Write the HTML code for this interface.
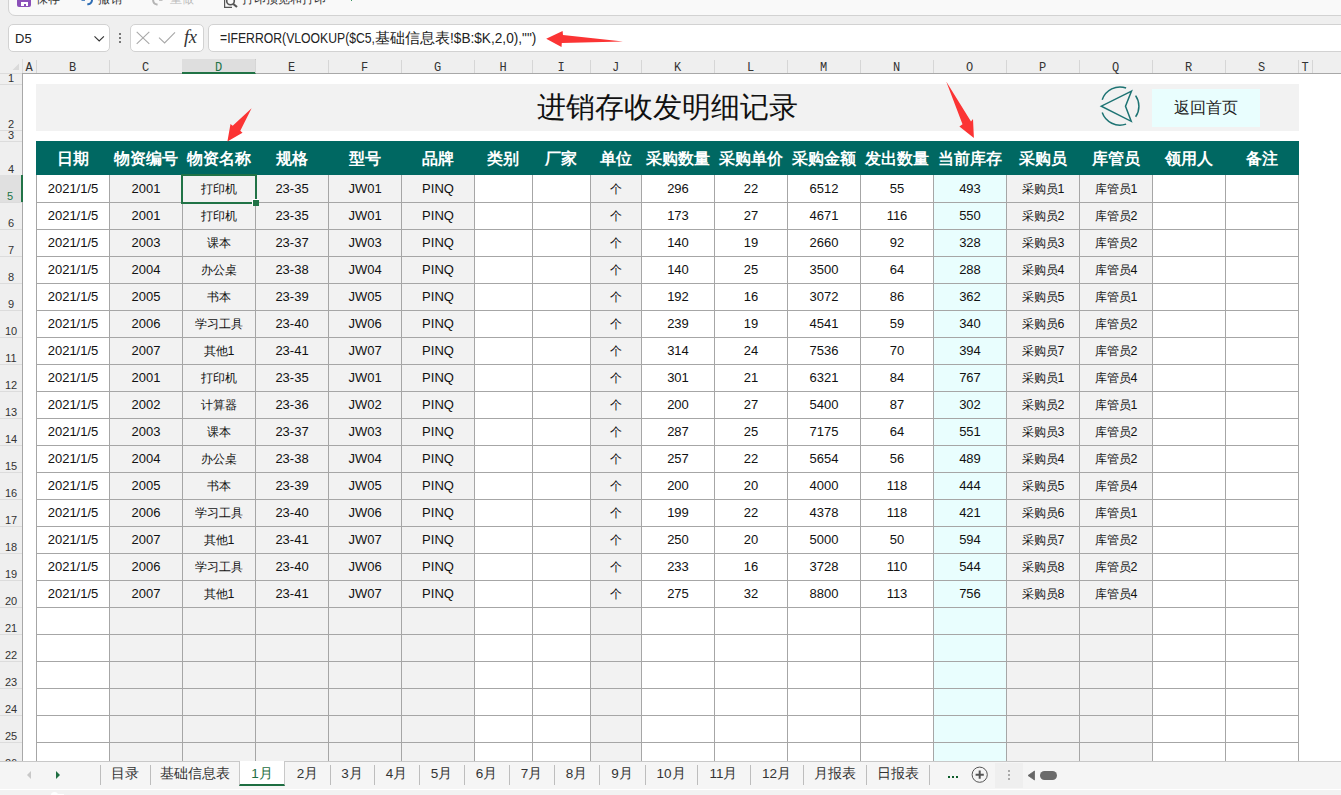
<!DOCTYPE html>
<html><head><meta charset="utf-8"><style>
*{box-sizing:border-box;margin:0;padding:0}
html,body{width:1341px;height:795px;overflow:hidden;background:#efefef;font-family:"Liberation Sans",sans-serif;position:relative}
.a{position:absolute}
.t{position:absolute;white-space:nowrap;text-align:center;display:flex;align-items:center;justify-content:center}
.ch{position:absolute;top:59px;height:14px;font-family:"Liberation Serif",serif;font-size:12px;line-height:14px;color:#333;text-align:center}
.rh{position:absolute;left:0;width:22px;font-family:"Liberation Serif",serif;font-size:12px;color:#333;text-align:center;display:flex;align-items:flex-end;justify-content:center}
.cell{position:absolute;height:27px;display:flex;align-items:center;justify-content:center;font-size:13px;color:#111;white-space:nowrap}
.hd{position:absolute;top:142px;height:34px;display:flex;align-items:center;justify-content:center;font-size:16px;font-weight:bold;color:#fff;white-space:nowrap}
.tab{position:absolute;top:760px;height:28px;display:flex;align-items:center;justify-content:center;font-size:13.5px;color:#333;white-space:nowrap}
.sep{position:absolute;top:765px;width:1px;height:20px;background:#bdbdbd}
</style></head><body>

<div class="a" style="left:8px;top:-12px;width:1400px;height:28px;background:#f9f9f9;border:1px solid #d2d2d2;border-radius:7px"></div>
<div class="a" style="left:23px;top:74px;width:1318px;height:687px;background:#fff"></div>
<div class="a" style="left:0;top:52px;width:1341px;height:21px;background:#efefef"></div>
<div class="a" style="left:22px;top:73px;width:1319px;height:1px;background:#a8a8a8"></div>
<div class="a" style="left:0;top:73px;width:22px;height:1px;background:#dcdcdc"></div>
<div class="a" style="left:22px;top:59px;width:1px;height:14px;background:#dcdcdc"></div>
<div class="a" style="left:22px;top:73px;width:1px;height:688px;background:#a8a8a8"></div>
<div class="ch" style="left:22px;width:14px;color:#333;"><span style="position:relative;top:1px;display:inline-block;font-family:'Liberation Mono',monospace;font-size:12px">A</span></div>
<div class="a" style="left:36px;top:60px;width:1px;height:13px;background:#d6d6d6"></div>
<div class="ch" style="left:36px;width:73px;color:#333;"><span style="position:relative;top:1px;display:inline-block;font-family:'Liberation Mono',monospace;font-size:12px">B</span></div>
<div class="a" style="left:109px;top:60px;width:1px;height:13px;background:#d6d6d6"></div>
<div class="ch" style="left:109px;width:73px;color:#333;"><span style="position:relative;top:1px;display:inline-block;font-family:'Liberation Mono',monospace;font-size:12px">C</span></div>
<div class="a" style="left:182px;top:60px;width:1px;height:13px;background:#d6d6d6"></div>
<div class="ch" style="left:182px;width:73px;color:#217346;background:#dedede;border-bottom:2px solid #217346;height:15px;width:74px;border-right:1px solid #c8c8c8;"><span style="position:relative;top:1px;display:inline-block;font-family:'Liberation Mono',monospace;font-size:12px">D</span></div>
<div class="a" style="left:255px;top:60px;width:1px;height:13px;background:#d6d6d6"></div>
<div class="ch" style="left:255px;width:73px;color:#333;"><span style="position:relative;top:1px;display:inline-block;font-family:'Liberation Mono',monospace;font-size:12px">E</span></div>
<div class="a" style="left:328px;top:60px;width:1px;height:13px;background:#d6d6d6"></div>
<div class="ch" style="left:328px;width:73px;color:#333;"><span style="position:relative;top:1px;display:inline-block;font-family:'Liberation Mono',monospace;font-size:12px">F</span></div>
<div class="a" style="left:401px;top:60px;width:1px;height:13px;background:#d6d6d6"></div>
<div class="ch" style="left:401px;width:73px;color:#333;"><span style="position:relative;top:1px;display:inline-block;font-family:'Liberation Mono',monospace;font-size:12px">G</span></div>
<div class="a" style="left:474px;top:60px;width:1px;height:13px;background:#d6d6d6"></div>
<div class="ch" style="left:474px;width:58px;color:#333;"><span style="position:relative;top:1px;display:inline-block;font-family:'Liberation Mono',monospace;font-size:12px">H</span></div>
<div class="a" style="left:532px;top:60px;width:1px;height:13px;background:#d6d6d6"></div>
<div class="ch" style="left:532px;width:58px;color:#333;"><span style="position:relative;top:1px;display:inline-block;font-family:'Liberation Mono',monospace;font-size:12px">I</span></div>
<div class="a" style="left:590px;top:60px;width:1px;height:13px;background:#d6d6d6"></div>
<div class="ch" style="left:590px;width:51px;color:#333;"><span style="position:relative;top:1px;display:inline-block;font-family:'Liberation Mono',monospace;font-size:12px">J</span></div>
<div class="a" style="left:641px;top:60px;width:1px;height:13px;background:#d6d6d6"></div>
<div class="ch" style="left:641px;width:73px;color:#333;"><span style="position:relative;top:1px;display:inline-block;font-family:'Liberation Mono',monospace;font-size:12px">K</span></div>
<div class="a" style="left:714px;top:60px;width:1px;height:13px;background:#d6d6d6"></div>
<div class="ch" style="left:714px;width:73px;color:#333;"><span style="position:relative;top:1px;display:inline-block;font-family:'Liberation Mono',monospace;font-size:12px">L</span></div>
<div class="a" style="left:787px;top:60px;width:1px;height:13px;background:#d6d6d6"></div>
<div class="ch" style="left:787px;width:73px;color:#333;"><span style="position:relative;top:1px;display:inline-block;font-family:'Liberation Mono',monospace;font-size:12px">M</span></div>
<div class="a" style="left:860px;top:60px;width:1px;height:13px;background:#d6d6d6"></div>
<div class="ch" style="left:860px;width:73px;color:#333;"><span style="position:relative;top:1px;display:inline-block;font-family:'Liberation Mono',monospace;font-size:12px">N</span></div>
<div class="a" style="left:933px;top:60px;width:1px;height:13px;background:#d6d6d6"></div>
<div class="ch" style="left:933px;width:73px;color:#333;"><span style="position:relative;top:1px;display:inline-block;font-family:'Liberation Mono',monospace;font-size:12px">O</span></div>
<div class="a" style="left:1006px;top:60px;width:1px;height:13px;background:#d6d6d6"></div>
<div class="ch" style="left:1006px;width:73px;color:#333;"><span style="position:relative;top:1px;display:inline-block;font-family:'Liberation Mono',monospace;font-size:12px">P</span></div>
<div class="a" style="left:1079px;top:60px;width:1px;height:13px;background:#d6d6d6"></div>
<div class="ch" style="left:1079px;width:73px;color:#333;"><span style="position:relative;top:1px;display:inline-block;font-family:'Liberation Mono',monospace;font-size:12px">Q</span></div>
<div class="a" style="left:1152px;top:60px;width:1px;height:13px;background:#d6d6d6"></div>
<div class="ch" style="left:1152px;width:73px;color:#333;"><span style="position:relative;top:1px;display:inline-block;font-family:'Liberation Mono',monospace;font-size:12px">R</span></div>
<div class="a" style="left:1225px;top:60px;width:1px;height:13px;background:#d6d6d6"></div>
<div class="ch" style="left:1225px;width:73px;color:#333;"><span style="position:relative;top:1px;display:inline-block;font-family:'Liberation Mono',monospace;font-size:12px">S</span></div>
<div class="a" style="left:1298px;top:60px;width:1px;height:13px;background:#d6d6d6"></div>
<div class="ch" style="left:1298px;width:14px;color:#333;"><span style="position:relative;top:1px;display:inline-block;font-family:'Liberation Mono',monospace;font-size:12px">T</span></div>
<div class="a" style="left:1312px;top:60px;width:1px;height:13px;background:#d6d6d6"></div>
<svg class="a" style="left:10px;top:62px" width="12" height="10" viewBox="0 0 12 10"><path d="M9 1.5 L9 8 L2.5 8 Z" fill="#dadada"/></svg>
<div class="rh" style="top:73px;height:11px;color:#333;"><span style="position:relative;top:0px;font-family:'Liberation Sans',sans-serif;font-size:11px">1</span></div>
<div class="a" style="left:0;top:84px;width:22px;height:1px;background:#dcdcdc"></div>
<div class="rh" style="top:84px;height:46px;color:#333;"><span style="position:relative;top:0px;font-family:'Liberation Sans',sans-serif;font-size:11px">2</span></div>
<div class="a" style="left:0;top:130px;width:22px;height:1px;background:#dcdcdc"></div>
<div class="rh" style="top:130px;height:11px;color:#333;"><span style="position:relative;top:0px;font-family:'Liberation Sans',sans-serif;font-size:11px">3</span></div>
<div class="a" style="left:0;top:141px;width:22px;height:1px;background:#dcdcdc"></div>
<div class="rh" style="top:141px;height:34px;color:#333;"><span style="position:relative;top:0px;font-family:'Liberation Sans',sans-serif;font-size:11px">4</span></div>
<div class="a" style="left:0;top:175px;width:22px;height:1px;background:#dcdcdc"></div>
<div class="rh" style="top:175px;height:27px;color:#217346;background:#e0e0e0;border-right:2px solid #217346;width:23px;padding-right:1px;"><span style="position:relative;top:0px;font-family:'Liberation Sans',sans-serif;font-size:11px">5</span></div>
<div class="a" style="left:0;top:202px;width:22px;height:1px;background:#dcdcdc"></div>
<div class="rh" style="top:202px;height:27px;color:#333;"><span style="position:relative;top:0px;font-family:'Liberation Sans',sans-serif;font-size:11px">6</span></div>
<div class="a" style="left:0;top:229px;width:22px;height:1px;background:#dcdcdc"></div>
<div class="rh" style="top:229px;height:27px;color:#333;"><span style="position:relative;top:0px;font-family:'Liberation Sans',sans-serif;font-size:11px">7</span></div>
<div class="a" style="left:0;top:256px;width:22px;height:1px;background:#dcdcdc"></div>
<div class="rh" style="top:256px;height:27px;color:#333;"><span style="position:relative;top:0px;font-family:'Liberation Sans',sans-serif;font-size:11px">8</span></div>
<div class="a" style="left:0;top:283px;width:22px;height:1px;background:#dcdcdc"></div>
<div class="rh" style="top:283px;height:27px;color:#333;"><span style="position:relative;top:0px;font-family:'Liberation Sans',sans-serif;font-size:11px">9</span></div>
<div class="a" style="left:0;top:310px;width:22px;height:1px;background:#dcdcdc"></div>
<div class="rh" style="top:310px;height:27px;color:#333;"><span style="position:relative;top:0px;font-family:'Liberation Sans',sans-serif;font-size:11px">10</span></div>
<div class="a" style="left:0;top:337px;width:22px;height:1px;background:#dcdcdc"></div>
<div class="rh" style="top:337px;height:27px;color:#333;"><span style="position:relative;top:0px;font-family:'Liberation Sans',sans-serif;font-size:11px">11</span></div>
<div class="a" style="left:0;top:364px;width:22px;height:1px;background:#dcdcdc"></div>
<div class="rh" style="top:364px;height:27px;color:#333;"><span style="position:relative;top:0px;font-family:'Liberation Sans',sans-serif;font-size:11px">12</span></div>
<div class="a" style="left:0;top:391px;width:22px;height:1px;background:#dcdcdc"></div>
<div class="rh" style="top:391px;height:27px;color:#333;"><span style="position:relative;top:0px;font-family:'Liberation Sans',sans-serif;font-size:11px">13</span></div>
<div class="a" style="left:0;top:418px;width:22px;height:1px;background:#dcdcdc"></div>
<div class="rh" style="top:418px;height:27px;color:#333;"><span style="position:relative;top:0px;font-family:'Liberation Sans',sans-serif;font-size:11px">14</span></div>
<div class="a" style="left:0;top:445px;width:22px;height:1px;background:#dcdcdc"></div>
<div class="rh" style="top:445px;height:27px;color:#333;"><span style="position:relative;top:0px;font-family:'Liberation Sans',sans-serif;font-size:11px">15</span></div>
<div class="a" style="left:0;top:472px;width:22px;height:1px;background:#dcdcdc"></div>
<div class="rh" style="top:472px;height:27px;color:#333;"><span style="position:relative;top:0px;font-family:'Liberation Sans',sans-serif;font-size:11px">16</span></div>
<div class="a" style="left:0;top:499px;width:22px;height:1px;background:#dcdcdc"></div>
<div class="rh" style="top:499px;height:27px;color:#333;"><span style="position:relative;top:0px;font-family:'Liberation Sans',sans-serif;font-size:11px">17</span></div>
<div class="a" style="left:0;top:526px;width:22px;height:1px;background:#dcdcdc"></div>
<div class="rh" style="top:526px;height:27px;color:#333;"><span style="position:relative;top:0px;font-family:'Liberation Sans',sans-serif;font-size:11px">18</span></div>
<div class="a" style="left:0;top:553px;width:22px;height:1px;background:#dcdcdc"></div>
<div class="rh" style="top:553px;height:27px;color:#333;"><span style="position:relative;top:0px;font-family:'Liberation Sans',sans-serif;font-size:11px">19</span></div>
<div class="a" style="left:0;top:580px;width:22px;height:1px;background:#dcdcdc"></div>
<div class="rh" style="top:580px;height:27px;color:#333;"><span style="position:relative;top:0px;font-family:'Liberation Sans',sans-serif;font-size:11px">20</span></div>
<div class="a" style="left:0;top:607px;width:22px;height:1px;background:#dcdcdc"></div>
<div class="rh" style="top:607px;height:27px;color:#333;"><span style="position:relative;top:0px;font-family:'Liberation Sans',sans-serif;font-size:11px">21</span></div>
<div class="a" style="left:0;top:634px;width:22px;height:1px;background:#dcdcdc"></div>
<div class="rh" style="top:634px;height:27px;color:#333;"><span style="position:relative;top:0px;font-family:'Liberation Sans',sans-serif;font-size:11px">22</span></div>
<div class="a" style="left:0;top:661px;width:22px;height:1px;background:#dcdcdc"></div>
<div class="rh" style="top:661px;height:27px;color:#333;"><span style="position:relative;top:0px;font-family:'Liberation Sans',sans-serif;font-size:11px">23</span></div>
<div class="a" style="left:0;top:688px;width:22px;height:1px;background:#dcdcdc"></div>
<div class="rh" style="top:688px;height:27px;color:#333;"><span style="position:relative;top:0px;font-family:'Liberation Sans',sans-serif;font-size:11px">24</span></div>
<div class="a" style="left:0;top:715px;width:22px;height:1px;background:#dcdcdc"></div>
<div class="rh" style="top:715px;height:27px;color:#333;"><span style="position:relative;top:0px;font-family:'Liberation Sans',sans-serif;font-size:11px">25</span></div>
<div class="a" style="left:0;top:742px;width:22px;height:1px;background:#dcdcdc"></div>
<div class="rh" style="top:742px;height:27px;color:#333;"><span style="position:relative;top:0px;font-family:'Liberation Sans',sans-serif;font-size:11px">26</span></div>
<div class="a" style="left:0;top:769px;width:22px;height:1px;background:#dcdcdc"></div>
<div class="a" style="left:36px;top:84px;width:1263px;height:47px;background:#f2f2f2"></div>
<div class="t" style="left:36px;top:84px;width:1262px;height:47px;font-size:29px;color:#111">进销存收发明细记录</div>
<div class="t" style="left:1152px;top:89px;width:108px;height:38px;background:#e9fefe;font-size:16px;color:#222">返回首页</div>
<svg class="a" style="left:1095px;top:81px" width="50" height="50" viewBox="1095 81 50 50">
<path d="M1131.5 91.1 L1101.3 106.2 L1131.2 121.3 L1125.5 106.2 Z" fill="none" stroke="#1d7373" stroke-width="1.5" stroke-linejoin="miter"/>
<path d="M1102.2 99.8 A18.8 18.8 0 0 1 1126.1 88" fill="none" stroke="#1d7373" stroke-width="1.5"/>
<path d="M1102.2 112.6 A18.8 18.8 0 0 0 1126.1 124.1" fill="none" stroke="#1d7373" stroke-width="1.5"/>
<path d="M1135.6 95.6 A18.6 18.6 0 0 1 1135.6 116.8" fill="none" stroke="#1d7373" stroke-width="1.5"/>
</svg>
<div class="a" style="left:36px;top:141px;width:1263px;height:34px;background:#006862"></div>
<div class="hd" style="left:36px;width:73px">日期</div>
<div class="hd" style="left:109px;width:73px">物资编号</div>
<div class="hd" style="left:182px;width:73px">物资名称</div>
<div class="hd" style="left:255px;width:73px">规格</div>
<div class="hd" style="left:328px;width:73px">型号</div>
<div class="hd" style="left:401px;width:73px">品牌</div>
<div class="hd" style="left:474px;width:58px">类别</div>
<div class="hd" style="left:532px;width:58px">厂家</div>
<div class="hd" style="left:590px;width:51px">单位</div>
<div class="hd" style="left:641px;width:73px">采购数量</div>
<div class="hd" style="left:714px;width:73px">采购单价</div>
<div class="hd" style="left:787px;width:73px">采购金额</div>
<div class="hd" style="left:860px;width:73px">发出数量</div>
<div class="hd" style="left:933px;width:73px">当前库存</div>
<div class="hd" style="left:1006px;width:73px">采购员</div>
<div class="hd" style="left:1079px;width:73px">库管员</div>
<div class="hd" style="left:1152px;width:73px">领用人</div>
<div class="hd" style="left:1225px;width:73px">备注</div>
<div class="a" style="left:109px;top:175px;width:73px;height:586px;background:#f2f2f2"></div>
<div class="a" style="left:182px;top:175px;width:73px;height:586px;background:#f2f2f2"></div>
<div class="a" style="left:255px;top:175px;width:73px;height:586px;background:#f2f2f2"></div>
<div class="a" style="left:328px;top:175px;width:73px;height:586px;background:#f2f2f2"></div>
<div class="a" style="left:401px;top:175px;width:73px;height:586px;background:#f2f2f2"></div>
<div class="a" style="left:590px;top:175px;width:51px;height:586px;background:#f2f2f2"></div>
<div class="a" style="left:933px;top:175px;width:73px;height:586px;background:#e9fefe"></div>
<div class="a" style="left:1006px;top:175px;width:73px;height:586px;background:#f2f2f2"></div>
<div class="a" style="left:1079px;top:175px;width:73px;height:586px;background:#f2f2f2"></div>
<div class="a" style="left:36px;top:175px;width:1px;height:586px;background:#a6a6a6"></div>
<div class="a" style="left:109px;top:175px;width:1px;height:586px;background:#a6a6a6"></div>
<div class="a" style="left:182px;top:175px;width:1px;height:586px;background:#a6a6a6"></div>
<div class="a" style="left:255px;top:175px;width:1px;height:586px;background:#a6a6a6"></div>
<div class="a" style="left:328px;top:175px;width:1px;height:586px;background:#a6a6a6"></div>
<div class="a" style="left:401px;top:175px;width:1px;height:586px;background:#a6a6a6"></div>
<div class="a" style="left:474px;top:175px;width:1px;height:586px;background:#a6a6a6"></div>
<div class="a" style="left:532px;top:175px;width:1px;height:586px;background:#a6a6a6"></div>
<div class="a" style="left:590px;top:175px;width:1px;height:586px;background:#a6a6a6"></div>
<div class="a" style="left:641px;top:175px;width:1px;height:586px;background:#a6a6a6"></div>
<div class="a" style="left:714px;top:175px;width:1px;height:586px;background:#a6a6a6"></div>
<div class="a" style="left:787px;top:175px;width:1px;height:586px;background:#a6a6a6"></div>
<div class="a" style="left:860px;top:175px;width:1px;height:586px;background:#a6a6a6"></div>
<div class="a" style="left:933px;top:175px;width:1px;height:586px;background:#a6a6a6"></div>
<div class="a" style="left:1006px;top:175px;width:1px;height:586px;background:#a6a6a6"></div>
<div class="a" style="left:1079px;top:175px;width:1px;height:586px;background:#a6a6a6"></div>
<div class="a" style="left:1152px;top:175px;width:1px;height:586px;background:#a6a6a6"></div>
<div class="a" style="left:1225px;top:175px;width:1px;height:586px;background:#a6a6a6"></div>
<div class="a" style="left:1298px;top:175px;width:1px;height:586px;background:#a6a6a6"></div>
<div class="a" style="left:36px;top:202px;width:1263px;height:1px;background:#a6a6a6"></div>
<div class="a" style="left:36px;top:229px;width:1263px;height:1px;background:#a6a6a6"></div>
<div class="a" style="left:36px;top:256px;width:1263px;height:1px;background:#a6a6a6"></div>
<div class="a" style="left:36px;top:283px;width:1263px;height:1px;background:#a6a6a6"></div>
<div class="a" style="left:36px;top:310px;width:1263px;height:1px;background:#a6a6a6"></div>
<div class="a" style="left:36px;top:337px;width:1263px;height:1px;background:#a6a6a6"></div>
<div class="a" style="left:36px;top:364px;width:1263px;height:1px;background:#a6a6a6"></div>
<div class="a" style="left:36px;top:391px;width:1263px;height:1px;background:#a6a6a6"></div>
<div class="a" style="left:36px;top:418px;width:1263px;height:1px;background:#a6a6a6"></div>
<div class="a" style="left:36px;top:445px;width:1263px;height:1px;background:#a6a6a6"></div>
<div class="a" style="left:36px;top:472px;width:1263px;height:1px;background:#a6a6a6"></div>
<div class="a" style="left:36px;top:499px;width:1263px;height:1px;background:#a6a6a6"></div>
<div class="a" style="left:36px;top:526px;width:1263px;height:1px;background:#a6a6a6"></div>
<div class="a" style="left:36px;top:553px;width:1263px;height:1px;background:#a6a6a6"></div>
<div class="a" style="left:36px;top:580px;width:1263px;height:1px;background:#a6a6a6"></div>
<div class="a" style="left:36px;top:607px;width:1263px;height:1px;background:#a6a6a6"></div>
<div class="a" style="left:36px;top:634px;width:1263px;height:1px;background:#a6a6a6"></div>
<div class="a" style="left:36px;top:661px;width:1263px;height:1px;background:#a6a6a6"></div>
<div class="a" style="left:36px;top:688px;width:1263px;height:1px;background:#a6a6a6"></div>
<div class="a" style="left:36px;top:715px;width:1263px;height:1px;background:#a6a6a6"></div>
<div class="a" style="left:36px;top:742px;width:1263px;height:1px;background:#a6a6a6"></div>
<div class="cell" style="left:36px;top:175px;width:74px;">2021/1/5</div>
<div class="cell" style="left:109px;top:175px;width:74px;">2001</div>
<div class="cell" style="left:182px;top:175px;width:74px;font-size:12.4px;padding-top:1px;">打印机</div>
<div class="cell" style="left:255px;top:175px;width:74px;">23-35</div>
<div class="cell" style="left:328px;top:175px;width:74px;">JW01</div>
<div class="cell" style="left:401px;top:175px;width:74px;">PINQ</div>
<div class="cell" style="left:590px;top:175px;width:52px;font-size:12.4px;padding-top:1px;">个</div>
<div class="cell" style="left:641px;top:175px;width:74px;">296</div>
<div class="cell" style="left:714px;top:175px;width:74px;">22</div>
<div class="cell" style="left:787px;top:175px;width:74px;">6512</div>
<div class="cell" style="left:860px;top:175px;width:74px;">55</div>
<div class="cell" style="left:933px;top:175px;width:74px;">493</div>
<div class="cell" style="left:1006px;top:175px;width:74px;font-size:12.4px;padding-top:1px;">采购员1</div>
<div class="cell" style="left:1079px;top:175px;width:74px;font-size:12.4px;padding-top:1px;">库管员1</div>
<div class="cell" style="left:36px;top:202px;width:74px;">2021/1/5</div>
<div class="cell" style="left:109px;top:202px;width:74px;">2001</div>
<div class="cell" style="left:182px;top:202px;width:74px;font-size:12.4px;padding-top:1px;">打印机</div>
<div class="cell" style="left:255px;top:202px;width:74px;">23-35</div>
<div class="cell" style="left:328px;top:202px;width:74px;">JW01</div>
<div class="cell" style="left:401px;top:202px;width:74px;">PINQ</div>
<div class="cell" style="left:590px;top:202px;width:52px;font-size:12.4px;padding-top:1px;">个</div>
<div class="cell" style="left:641px;top:202px;width:74px;">173</div>
<div class="cell" style="left:714px;top:202px;width:74px;">27</div>
<div class="cell" style="left:787px;top:202px;width:74px;">4671</div>
<div class="cell" style="left:860px;top:202px;width:74px;">116</div>
<div class="cell" style="left:933px;top:202px;width:74px;">550</div>
<div class="cell" style="left:1006px;top:202px;width:74px;font-size:12.4px;padding-top:1px;">采购员2</div>
<div class="cell" style="left:1079px;top:202px;width:74px;font-size:12.4px;padding-top:1px;">库管员2</div>
<div class="cell" style="left:36px;top:229px;width:74px;">2021/1/5</div>
<div class="cell" style="left:109px;top:229px;width:74px;">2003</div>
<div class="cell" style="left:182px;top:229px;width:74px;font-size:12.4px;padding-top:1px;">课本</div>
<div class="cell" style="left:255px;top:229px;width:74px;">23-37</div>
<div class="cell" style="left:328px;top:229px;width:74px;">JW03</div>
<div class="cell" style="left:401px;top:229px;width:74px;">PINQ</div>
<div class="cell" style="left:590px;top:229px;width:52px;font-size:12.4px;padding-top:1px;">个</div>
<div class="cell" style="left:641px;top:229px;width:74px;">140</div>
<div class="cell" style="left:714px;top:229px;width:74px;">19</div>
<div class="cell" style="left:787px;top:229px;width:74px;">2660</div>
<div class="cell" style="left:860px;top:229px;width:74px;">92</div>
<div class="cell" style="left:933px;top:229px;width:74px;">328</div>
<div class="cell" style="left:1006px;top:229px;width:74px;font-size:12.4px;padding-top:1px;">采购员3</div>
<div class="cell" style="left:1079px;top:229px;width:74px;font-size:12.4px;padding-top:1px;">库管员2</div>
<div class="cell" style="left:36px;top:256px;width:74px;">2021/1/5</div>
<div class="cell" style="left:109px;top:256px;width:74px;">2004</div>
<div class="cell" style="left:182px;top:256px;width:74px;font-size:12.4px;padding-top:1px;">办公桌</div>
<div class="cell" style="left:255px;top:256px;width:74px;">23-38</div>
<div class="cell" style="left:328px;top:256px;width:74px;">JW04</div>
<div class="cell" style="left:401px;top:256px;width:74px;">PINQ</div>
<div class="cell" style="left:590px;top:256px;width:52px;font-size:12.4px;padding-top:1px;">个</div>
<div class="cell" style="left:641px;top:256px;width:74px;">140</div>
<div class="cell" style="left:714px;top:256px;width:74px;">25</div>
<div class="cell" style="left:787px;top:256px;width:74px;">3500</div>
<div class="cell" style="left:860px;top:256px;width:74px;">64</div>
<div class="cell" style="left:933px;top:256px;width:74px;">288</div>
<div class="cell" style="left:1006px;top:256px;width:74px;font-size:12.4px;padding-top:1px;">采购员4</div>
<div class="cell" style="left:1079px;top:256px;width:74px;font-size:12.4px;padding-top:1px;">库管员4</div>
<div class="cell" style="left:36px;top:283px;width:74px;">2021/1/5</div>
<div class="cell" style="left:109px;top:283px;width:74px;">2005</div>
<div class="cell" style="left:182px;top:283px;width:74px;font-size:12.4px;padding-top:1px;">书本</div>
<div class="cell" style="left:255px;top:283px;width:74px;">23-39</div>
<div class="cell" style="left:328px;top:283px;width:74px;">JW05</div>
<div class="cell" style="left:401px;top:283px;width:74px;">PINQ</div>
<div class="cell" style="left:590px;top:283px;width:52px;font-size:12.4px;padding-top:1px;">个</div>
<div class="cell" style="left:641px;top:283px;width:74px;">192</div>
<div class="cell" style="left:714px;top:283px;width:74px;">16</div>
<div class="cell" style="left:787px;top:283px;width:74px;">3072</div>
<div class="cell" style="left:860px;top:283px;width:74px;">86</div>
<div class="cell" style="left:933px;top:283px;width:74px;">362</div>
<div class="cell" style="left:1006px;top:283px;width:74px;font-size:12.4px;padding-top:1px;">采购员5</div>
<div class="cell" style="left:1079px;top:283px;width:74px;font-size:12.4px;padding-top:1px;">库管员1</div>
<div class="cell" style="left:36px;top:310px;width:74px;">2021/1/5</div>
<div class="cell" style="left:109px;top:310px;width:74px;">2006</div>
<div class="cell" style="left:182px;top:310px;width:74px;font-size:12.4px;padding-top:1px;">学习工具</div>
<div class="cell" style="left:255px;top:310px;width:74px;">23-40</div>
<div class="cell" style="left:328px;top:310px;width:74px;">JW06</div>
<div class="cell" style="left:401px;top:310px;width:74px;">PINQ</div>
<div class="cell" style="left:590px;top:310px;width:52px;font-size:12.4px;padding-top:1px;">个</div>
<div class="cell" style="left:641px;top:310px;width:74px;">239</div>
<div class="cell" style="left:714px;top:310px;width:74px;">19</div>
<div class="cell" style="left:787px;top:310px;width:74px;">4541</div>
<div class="cell" style="left:860px;top:310px;width:74px;">59</div>
<div class="cell" style="left:933px;top:310px;width:74px;">340</div>
<div class="cell" style="left:1006px;top:310px;width:74px;font-size:12.4px;padding-top:1px;">采购员6</div>
<div class="cell" style="left:1079px;top:310px;width:74px;font-size:12.4px;padding-top:1px;">库管员2</div>
<div class="cell" style="left:36px;top:337px;width:74px;">2021/1/5</div>
<div class="cell" style="left:109px;top:337px;width:74px;">2007</div>
<div class="cell" style="left:182px;top:337px;width:74px;font-size:12.4px;padding-top:1px;">其他1</div>
<div class="cell" style="left:255px;top:337px;width:74px;">23-41</div>
<div class="cell" style="left:328px;top:337px;width:74px;">JW07</div>
<div class="cell" style="left:401px;top:337px;width:74px;">PINQ</div>
<div class="cell" style="left:590px;top:337px;width:52px;font-size:12.4px;padding-top:1px;">个</div>
<div class="cell" style="left:641px;top:337px;width:74px;">314</div>
<div class="cell" style="left:714px;top:337px;width:74px;">24</div>
<div class="cell" style="left:787px;top:337px;width:74px;">7536</div>
<div class="cell" style="left:860px;top:337px;width:74px;">70</div>
<div class="cell" style="left:933px;top:337px;width:74px;">394</div>
<div class="cell" style="left:1006px;top:337px;width:74px;font-size:12.4px;padding-top:1px;">采购员7</div>
<div class="cell" style="left:1079px;top:337px;width:74px;font-size:12.4px;padding-top:1px;">库管员2</div>
<div class="cell" style="left:36px;top:364px;width:74px;">2021/1/5</div>
<div class="cell" style="left:109px;top:364px;width:74px;">2001</div>
<div class="cell" style="left:182px;top:364px;width:74px;font-size:12.4px;padding-top:1px;">打印机</div>
<div class="cell" style="left:255px;top:364px;width:74px;">23-35</div>
<div class="cell" style="left:328px;top:364px;width:74px;">JW01</div>
<div class="cell" style="left:401px;top:364px;width:74px;">PINQ</div>
<div class="cell" style="left:590px;top:364px;width:52px;font-size:12.4px;padding-top:1px;">个</div>
<div class="cell" style="left:641px;top:364px;width:74px;">301</div>
<div class="cell" style="left:714px;top:364px;width:74px;">21</div>
<div class="cell" style="left:787px;top:364px;width:74px;">6321</div>
<div class="cell" style="left:860px;top:364px;width:74px;">84</div>
<div class="cell" style="left:933px;top:364px;width:74px;">767</div>
<div class="cell" style="left:1006px;top:364px;width:74px;font-size:12.4px;padding-top:1px;">采购员1</div>
<div class="cell" style="left:1079px;top:364px;width:74px;font-size:12.4px;padding-top:1px;">库管员4</div>
<div class="cell" style="left:36px;top:391px;width:74px;">2021/1/5</div>
<div class="cell" style="left:109px;top:391px;width:74px;">2002</div>
<div class="cell" style="left:182px;top:391px;width:74px;font-size:12.4px;padding-top:1px;">计算器</div>
<div class="cell" style="left:255px;top:391px;width:74px;">23-36</div>
<div class="cell" style="left:328px;top:391px;width:74px;">JW02</div>
<div class="cell" style="left:401px;top:391px;width:74px;">PINQ</div>
<div class="cell" style="left:590px;top:391px;width:52px;font-size:12.4px;padding-top:1px;">个</div>
<div class="cell" style="left:641px;top:391px;width:74px;">200</div>
<div class="cell" style="left:714px;top:391px;width:74px;">27</div>
<div class="cell" style="left:787px;top:391px;width:74px;">5400</div>
<div class="cell" style="left:860px;top:391px;width:74px;">87</div>
<div class="cell" style="left:933px;top:391px;width:74px;">302</div>
<div class="cell" style="left:1006px;top:391px;width:74px;font-size:12.4px;padding-top:1px;">采购员2</div>
<div class="cell" style="left:1079px;top:391px;width:74px;font-size:12.4px;padding-top:1px;">库管员1</div>
<div class="cell" style="left:36px;top:418px;width:74px;">2021/1/5</div>
<div class="cell" style="left:109px;top:418px;width:74px;">2003</div>
<div class="cell" style="left:182px;top:418px;width:74px;font-size:12.4px;padding-top:1px;">课本</div>
<div class="cell" style="left:255px;top:418px;width:74px;">23-37</div>
<div class="cell" style="left:328px;top:418px;width:74px;">JW03</div>
<div class="cell" style="left:401px;top:418px;width:74px;">PINQ</div>
<div class="cell" style="left:590px;top:418px;width:52px;font-size:12.4px;padding-top:1px;">个</div>
<div class="cell" style="left:641px;top:418px;width:74px;">287</div>
<div class="cell" style="left:714px;top:418px;width:74px;">25</div>
<div class="cell" style="left:787px;top:418px;width:74px;">7175</div>
<div class="cell" style="left:860px;top:418px;width:74px;">64</div>
<div class="cell" style="left:933px;top:418px;width:74px;">551</div>
<div class="cell" style="left:1006px;top:418px;width:74px;font-size:12.4px;padding-top:1px;">采购员3</div>
<div class="cell" style="left:1079px;top:418px;width:74px;font-size:12.4px;padding-top:1px;">库管员2</div>
<div class="cell" style="left:36px;top:445px;width:74px;">2021/1/5</div>
<div class="cell" style="left:109px;top:445px;width:74px;">2004</div>
<div class="cell" style="left:182px;top:445px;width:74px;font-size:12.4px;padding-top:1px;">办公桌</div>
<div class="cell" style="left:255px;top:445px;width:74px;">23-38</div>
<div class="cell" style="left:328px;top:445px;width:74px;">JW04</div>
<div class="cell" style="left:401px;top:445px;width:74px;">PINQ</div>
<div class="cell" style="left:590px;top:445px;width:52px;font-size:12.4px;padding-top:1px;">个</div>
<div class="cell" style="left:641px;top:445px;width:74px;">257</div>
<div class="cell" style="left:714px;top:445px;width:74px;">22</div>
<div class="cell" style="left:787px;top:445px;width:74px;">5654</div>
<div class="cell" style="left:860px;top:445px;width:74px;">56</div>
<div class="cell" style="left:933px;top:445px;width:74px;">489</div>
<div class="cell" style="left:1006px;top:445px;width:74px;font-size:12.4px;padding-top:1px;">采购员4</div>
<div class="cell" style="left:1079px;top:445px;width:74px;font-size:12.4px;padding-top:1px;">库管员2</div>
<div class="cell" style="left:36px;top:472px;width:74px;">2021/1/5</div>
<div class="cell" style="left:109px;top:472px;width:74px;">2005</div>
<div class="cell" style="left:182px;top:472px;width:74px;font-size:12.4px;padding-top:1px;">书本</div>
<div class="cell" style="left:255px;top:472px;width:74px;">23-39</div>
<div class="cell" style="left:328px;top:472px;width:74px;">JW05</div>
<div class="cell" style="left:401px;top:472px;width:74px;">PINQ</div>
<div class="cell" style="left:590px;top:472px;width:52px;font-size:12.4px;padding-top:1px;">个</div>
<div class="cell" style="left:641px;top:472px;width:74px;">200</div>
<div class="cell" style="left:714px;top:472px;width:74px;">20</div>
<div class="cell" style="left:787px;top:472px;width:74px;">4000</div>
<div class="cell" style="left:860px;top:472px;width:74px;">118</div>
<div class="cell" style="left:933px;top:472px;width:74px;">444</div>
<div class="cell" style="left:1006px;top:472px;width:74px;font-size:12.4px;padding-top:1px;">采购员5</div>
<div class="cell" style="left:1079px;top:472px;width:74px;font-size:12.4px;padding-top:1px;">库管员4</div>
<div class="cell" style="left:36px;top:499px;width:74px;">2021/1/5</div>
<div class="cell" style="left:109px;top:499px;width:74px;">2006</div>
<div class="cell" style="left:182px;top:499px;width:74px;font-size:12.4px;padding-top:1px;">学习工具</div>
<div class="cell" style="left:255px;top:499px;width:74px;">23-40</div>
<div class="cell" style="left:328px;top:499px;width:74px;">JW06</div>
<div class="cell" style="left:401px;top:499px;width:74px;">PINQ</div>
<div class="cell" style="left:590px;top:499px;width:52px;font-size:12.4px;padding-top:1px;">个</div>
<div class="cell" style="left:641px;top:499px;width:74px;">199</div>
<div class="cell" style="left:714px;top:499px;width:74px;">22</div>
<div class="cell" style="left:787px;top:499px;width:74px;">4378</div>
<div class="cell" style="left:860px;top:499px;width:74px;">118</div>
<div class="cell" style="left:933px;top:499px;width:74px;">421</div>
<div class="cell" style="left:1006px;top:499px;width:74px;font-size:12.4px;padding-top:1px;">采购员6</div>
<div class="cell" style="left:1079px;top:499px;width:74px;font-size:12.4px;padding-top:1px;">库管员1</div>
<div class="cell" style="left:36px;top:526px;width:74px;">2021/1/5</div>
<div class="cell" style="left:109px;top:526px;width:74px;">2007</div>
<div class="cell" style="left:182px;top:526px;width:74px;font-size:12.4px;padding-top:1px;">其他1</div>
<div class="cell" style="left:255px;top:526px;width:74px;">23-41</div>
<div class="cell" style="left:328px;top:526px;width:74px;">JW07</div>
<div class="cell" style="left:401px;top:526px;width:74px;">PINQ</div>
<div class="cell" style="left:590px;top:526px;width:52px;font-size:12.4px;padding-top:1px;">个</div>
<div class="cell" style="left:641px;top:526px;width:74px;">250</div>
<div class="cell" style="left:714px;top:526px;width:74px;">20</div>
<div class="cell" style="left:787px;top:526px;width:74px;">5000</div>
<div class="cell" style="left:860px;top:526px;width:74px;">50</div>
<div class="cell" style="left:933px;top:526px;width:74px;">594</div>
<div class="cell" style="left:1006px;top:526px;width:74px;font-size:12.4px;padding-top:1px;">采购员7</div>
<div class="cell" style="left:1079px;top:526px;width:74px;font-size:12.4px;padding-top:1px;">库管员2</div>
<div class="cell" style="left:36px;top:553px;width:74px;">2021/1/5</div>
<div class="cell" style="left:109px;top:553px;width:74px;">2006</div>
<div class="cell" style="left:182px;top:553px;width:74px;font-size:12.4px;padding-top:1px;">学习工具</div>
<div class="cell" style="left:255px;top:553px;width:74px;">23-40</div>
<div class="cell" style="left:328px;top:553px;width:74px;">JW06</div>
<div class="cell" style="left:401px;top:553px;width:74px;">PINQ</div>
<div class="cell" style="left:590px;top:553px;width:52px;font-size:12.4px;padding-top:1px;">个</div>
<div class="cell" style="left:641px;top:553px;width:74px;">233</div>
<div class="cell" style="left:714px;top:553px;width:74px;">16</div>
<div class="cell" style="left:787px;top:553px;width:74px;">3728</div>
<div class="cell" style="left:860px;top:553px;width:74px;">110</div>
<div class="cell" style="left:933px;top:553px;width:74px;">544</div>
<div class="cell" style="left:1006px;top:553px;width:74px;font-size:12.4px;padding-top:1px;">采购员8</div>
<div class="cell" style="left:1079px;top:553px;width:74px;font-size:12.4px;padding-top:1px;">库管员2</div>
<div class="cell" style="left:36px;top:580px;width:74px;">2021/1/5</div>
<div class="cell" style="left:109px;top:580px;width:74px;">2007</div>
<div class="cell" style="left:182px;top:580px;width:74px;font-size:12.4px;padding-top:1px;">其他1</div>
<div class="cell" style="left:255px;top:580px;width:74px;">23-41</div>
<div class="cell" style="left:328px;top:580px;width:74px;">JW07</div>
<div class="cell" style="left:401px;top:580px;width:74px;">PINQ</div>
<div class="cell" style="left:590px;top:580px;width:52px;font-size:12.4px;padding-top:1px;">个</div>
<div class="cell" style="left:641px;top:580px;width:74px;">275</div>
<div class="cell" style="left:714px;top:580px;width:74px;">32</div>
<div class="cell" style="left:787px;top:580px;width:74px;">8800</div>
<div class="cell" style="left:860px;top:580px;width:74px;">113</div>
<div class="cell" style="left:933px;top:580px;width:74px;">756</div>
<div class="cell" style="left:1006px;top:580px;width:74px;font-size:12.4px;padding-top:1px;">采购员8</div>
<div class="cell" style="left:1079px;top:580px;width:74px;font-size:12.4px;padding-top:1px;">库管员4</div>
<div class="a" style="left:181px;top:174px;width:76px;height:30px;border:2px solid #217346"></div>
<div class="a" style="left:252px;top:199px;width:7px;height:7px;background:#217346;border-left:1px solid #fff;border-top:1px solid #fff"></div>
<div class="a" style="left:8px;top:24px;width:102px;height:28px;background:#fff;border:1px solid #d2d2d2;border-radius:5px"></div>
<div class="a" style="left:15px;top:25px;height:28px;line-height:28px;font-size:13px;color:#222">D5</div>
<svg class="a" style="left:93px;top:35px" width="12" height="8" viewBox="0 0 12 8"><path d="M1.5 1.3 L6.2 6 L10.9 1.3" fill="none" stroke="#333" stroke-width="1.1"/></svg>
<div class="a" style="left:119px;top:32.5px;width:2px;height:2px;background:#777"></div><div class="a" style="left:119px;top:36.8px;width:2px;height:2px;background:#777"></div><div class="a" style="left:119px;top:41.1px;width:2px;height:2px;background:#777"></div>
<div class="a" style="left:130px;top:24px;width:74px;height:28px;background:#fff;border:1px solid #d2d2d2;border-radius:5px"></div>
<svg class="a" style="left:130px;top:24px" width="74" height="28" viewBox="0 0 74 28"><path d="M6.7 7.8 L19.3 19.9 M19.3 7.8 L6.7 19.9" stroke="#a8a8a8" stroke-width="1.1"/><path d="M29 13.6 L34.6 19 L45 8.4" fill="none" stroke="#a8a8a8" stroke-width="1.1"/></svg>
<div class="a" style="left:184px;top:23px;height:28px;line-height:28px;font-family:'Liberation Serif',serif;font-style:italic;font-size:18.5px;color:#333;letter-spacing:-0.5px">fx</div>
<div class="a" style="left:208px;top:24px;width:1200px;height:28px;background:#fff;border:1px solid #d2d2d2;border-radius:5px"></div>
<div class="a" style="left:220px;top:24px;height:28px;line-height:28px;font-size:14px;color:#222;white-space:nowrap"><span style="display:inline-block;width:155px"><span style="display:inline-block;transform:scaleX(0.872);transform-origin:0 50%">=IFERROR(VLOOKUP($C5,</span></span><span style="display:inline-block;width:75px;font-size:15px">基础信息表</span><span style="display:inline-block;transform:scaleX(0.975);transform-origin:0 50%">!$B:$K,2,0),"")</span></div>
<div class="a" style="left:17px;top:-8px;width:14px;height:14.7px;background:#8b50b9;border-radius:2px"></div><div class="a" style="left:21px;top:2px;width:7px;height:4px;background:#fff"></div><div class="a" style="left:24px;top:4px;width:1.6px;height:2px;background:#8b50b9"></div>
<div class="a" style="left:36px;top:-9px;font-size:12px;line-height:16px;color:#333">保存</div>
<div class="a" style="left:98px;top:-9px;font-size:12px;line-height:16px;color:#333">撤销</div>
<svg class="a" style="left:75px;top:-10px" width="25" height="20" viewBox="75 -10 25 20"><path d="M86 -5 H88 A4.7 4.7 0 0 1 88 4.3 L87.3 4.3" fill="none" stroke="#2e6db4" stroke-width="2"/><rect x="81.5" y="-2" width="3.5" height="2.8" fill="#2e6db4"/></svg>
<svg class="a" style="left:145px;top:-10px" width="25" height="20" viewBox="145 -10 25 20"><path d="M159 -5 H157 A4.9 4.9 0 0 0 157 4.6 L157.6 4.6" fill="none" stroke="#b4b4b4" stroke-width="2"/><rect x="159" y="-2" width="3.5" height="2.8" fill="#b4b4b4"/></svg>
<div class="a" style="left:351px;top:-1px;width:1.4px;height:2.2px;background:#2e8f58;border-radius:1px"></div>
<div class="a" style="left:170px;top:-9px;font-size:12px;line-height:16px;color:#bbb">重做</div>
<svg class="a" style="left:222px;top:-8px" width="18" height="17" viewBox="0 0 18 17"><path d="M2.6 0 V15.3 H10" fill="none" stroke="#555" stroke-width="1.2"/><circle cx="8.5" cy="9" r="3.8" fill="none" stroke="#555" stroke-width="1.6"/><path d="M11.3 12 L15 15" stroke="#555" stroke-width="2.2"/></svg>
<div class="a" style="left:242px;top:-9px;font-size:12px;line-height:16px;color:#333">打印预览和打印</div>
<div class="a" style="left:0;top:761px;width:1341px;height:28px;background:#f5f5f5;border-top:1px solid #c8c8c8"></div>
<div class="a" style="left:0;top:789px;width:1341px;height:1px;background:#fff"></div>
<div class="a" style="left:0;top:790px;width:1341px;height:5px;background:#f2f2f2"></div>
<div class="a" style="left:51px;top:792px;width:7px;height:7px;border-radius:50%;background:#fff"></div><div class="a" style="left:58px;top:794px;width:6px;height:3px;background:#fff"></div>
<svg class="a" style="left:24px;top:768px" width="40" height="14" viewBox="0 0 40 14"><path d="M7 3 L3 7 L7 11 Z" fill="#c8c8c8"/><path d="M32 3 L36 7 L32 11 Z" fill="#1e6e42"/></svg>
<div class="tab" style="left:100px;width:50px">目录</div>
<div class="tab" style="left:150px;width:89px">基础信息表</div>
<div class="a" style="left:239px;top:761px;width:46px;height:25px;background:#fff;border-bottom:2px solid #1e6e42;border-left:1px solid #c8c8c8;border-right:1px solid #c8c8c8"></div>
<div class="tab" style="left:239px;width:46px;color:#1e6e42">1月</div>
<div class="tab" style="left:285px;width:45px">2月</div>
<div class="tab" style="left:330px;width:44px">3月</div>
<div class="tab" style="left:374px;width:45px">4月</div>
<div class="tab" style="left:419px;width:45px">5月</div>
<div class="tab" style="left:464px;width:45px">6月</div>
<div class="tab" style="left:509px;width:45px">7月</div>
<div class="tab" style="left:554px;width:45px">8月</div>
<div class="tab" style="left:599px;width:46px">9月</div>
<div class="tab" style="left:645px;width:52px">10月</div>
<div class="tab" style="left:697px;width:53px">11月</div>
<div class="tab" style="left:750px;width:53px">12月</div>
<div class="tab" style="left:803px;width:63px">月报表</div>
<div class="tab" style="left:866px;width:63px">日报表</div>
<div class="sep" style="left:100px"></div>
<div class="sep" style="left:150px"></div>
<div class="sep" style="left:330px"></div>
<div class="sep" style="left:374px"></div>
<div class="sep" style="left:419px"></div>
<div class="sep" style="left:464px"></div>
<div class="sep" style="left:509px"></div>
<div class="sep" style="left:554px"></div>
<div class="sep" style="left:599px"></div>
<div class="sep" style="left:645px"></div>
<div class="sep" style="left:697px"></div>
<div class="sep" style="left:750px"></div>
<div class="sep" style="left:803px"></div>
<div class="sep" style="left:866px"></div>
<div class="sep" style="left:929px"></div>
<div class="a" style="left:948px;top:776px;width:2px;height:2px;background:#0d5c2a"></div><div class="a" style="left:952px;top:776px;width:2px;height:2px;background:#0d5c2a"></div><div class="a" style="left:956px;top:776px;width:2px;height:2px;background:#0d5c2a"></div>
<svg class="a" style="left:970px;top:765px" width="20" height="20" viewBox="0 0 20 20"><circle cx="9.7" cy="9.7" r="7.6" fill="none" stroke="#555" stroke-width="1"/><path d="M9.7 5.6 V13.8 M5.6 9.7 H13.8" stroke="#555" stroke-width="2"/></svg>
<div class="a" style="left:995px;top:763px;width:28px;height:25px;background:#efefef"></div>
<div class="a" style="left:1008px;top:770px;width:2px;height:2px;background:#aaa"></div><div class="a" style="left:1008px;top:774px;width:2px;height:2px;background:#aaa"></div><div class="a" style="left:1008px;top:778px;width:2px;height:2px;background:#aaa"></div>
<svg class="a" style="left:1026px;top:770px" width="10" height="11" viewBox="0 0 10 11"><path d="M8.5 1 L2 5.5 L8.5 10 Z" fill="#666" stroke="#666" stroke-width="0.8" stroke-linejoin="round"/></svg>
<div class="a" style="left:1040px;top:771px;width:17px;height:9px;background:#6b6b6b;border-radius:4.5px"></div>
<svg class="a" style="left:0;top:0" width="1341" height="795" viewBox="0 0 1341 795">
<polygon fill="#fb3434" points="251.6,108.2 232.7,125.8 230.5,123.9 227.4,141.5 242.5,132.7 240.3,130.8"/>
<polygon fill="#fb3434" points="946.2,81.5 971.0,121.5 973.0,119.0 973.9,137.9 959.4,126.4 962.5,124.2"/>
<polygon fill="#fb3434" points="546.2,38.8 562.6,31 563,35.1 623,41.4 561.8,42.9 561.5,47"/>
</svg>
</body></html>
